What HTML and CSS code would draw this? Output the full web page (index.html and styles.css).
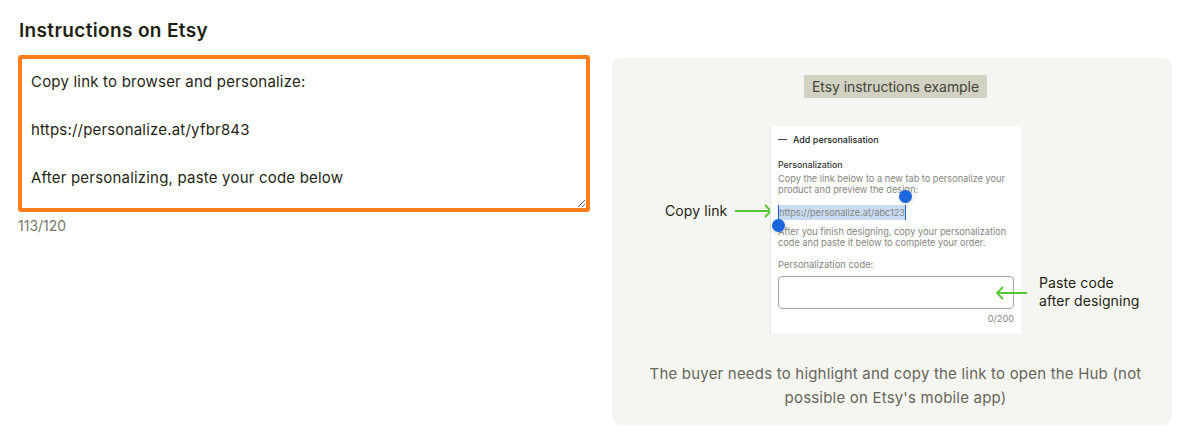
FILE: index.html
```html
<!DOCTYPE html>
<html lang="en">
<head>
  <meta charset="UTF-8">
  <meta name="viewport" content="width=device-width, initial-scale=1.0">
  <title>Instructions on Etsy</title>
  <link rel="stylesheet" href="styles.css">
</head>
<body>
  <h2 class="title">Instructions on Etsy</h2>
  <div class="columns">
    <div class="editor">
      <textarea class="editor-input" spellcheck="false">Copy link to browser and personalize:

https://personalize.at/yfbr843

After personalizing, paste your code below</textarea>
      <div class="counter">113/120</div>
    </div>

    <section class="example">
      <div class="example-tag">Etsy instructions example</div>

      <div class="figure">
        <div class="callout callout-copy">Copy link</div>
        <svg class="arrow arrow-copy" viewBox="0 0 38 14" width="38" height="14">
          <path d="M0 7H36M30 1l6 6-6 6" fill="none" stroke="#56c632" stroke-width="1.8"/>
        </svg>

        <div class="mock">
          <div class="mock-head"><span class="mock-dash"></span>Add personalisation</div>
          <div class="mock-label">Personalization</div>
          <p class="mock-text">Copy the link below to a new tab to personalize your product and preview the design:</p>
          <div class="mock-link"><span class="mock-selected">https://personalize.at/abc123</span></div>
          <p class="mock-text">After you finish designing, copy your personalization code and paste it below to complete your order.</p>
          <div class="mock-code-label">Personalization code:</div>
          <div class="mock-input"></div>
          <div class="mock-count">0/200</div>
          <span class="handle handle-top"></span>
          <span class="handle handle-bottom"></span>
        </div>

        <svg class="arrow arrow-paste" viewBox="0 0 32 14" width="32" height="14">
          <path d="M32 7H2M8 1L2 7l6 6" fill="none" stroke="#56c632" stroke-width="1.8"/>
        </svg>
        <div class="callout callout-paste">Paste code<br>after designing</div>
      </div>

      <p class="example-note">The buyer needs to highlight and copy the link to open the Hub (not possible on Etsy's mobile app)</p>
    </section>
  </div>
</body>
</html>
```

FILE: styles.css
```css
* {
  box-sizing: border-box;
}

html,
body {
  height: 100%;
}

body {
  margin: 0;
  padding: 20px 28px 0 18px;
  background-color: #fff;
  color: #1f1f14;
  font-family: "Inter", "Liberation Sans", sans-serif;
  overflow: hidden;
}

.title {
  margin: 0 0 13px 1px;
  font-size: 19px;
  line-height: 22px;
  font-weight: 600;
  letter-spacing: 0.35px;
}

.columns {
  display: flex;
  align-items: flex-start;
  gap: 22px;
}

.editor {
  width: 572px;
  flex-shrink: 0;
}

.editor-input {
  display: block;
  width: 100%;
  height: 157px;
  padding: 11px 8px 0 9px;
  border: 4px solid #ff7d1a;
  border-radius: 3px;
  outline: none;
  font-family: inherit;
  font-size: 15px;
  line-height: 24px;
  letter-spacing: 0.2px;
  color: #1f1f14;
  background: #fff;
}

.counter {
  margin-top: 6px;
  font-size: 14px;
  line-height: 16px;
  color: #77776a;
}

.example {
  flex: 1;
  height: 367px;
  margin-top: 3px;
  padding: 17px 30px 0 37px;
  background-color: #f5f5f1;
  border-radius: 8px;
  text-align: center;
}

.example-tag {
  display: inline-block;
  padding: 0 8px;
  background-color: #d2d2c3;
  font-size: 14px;
  line-height: 23px;
  letter-spacing: -0.08px;
  color: #44443a;
}

.figure {
  position: relative;
  margin: 28px 0 0 -7px;
  height: 208px;
  text-align: left;
}

.mock {
  position: absolute;
  left: 128px;
  top: 0;
  width: 251px;
  height: 208px;
  padding: 0 7px;
  background-color: #fff;
  border-left: 1px solid #e6e6e6;
  font-size: 9.2px;
  line-height: 11.5px;
  color: #85857f;
}

.mock-head {
  display: flex;
  align-items: center;
  gap: 6px;
  height: 27px;
  font-size: 9px;
  color: #222;
  font-weight: 500;
}

.mock-dash {
  width: 9px;
  height: 1px;
  background-color: #444;
}

.mock-label {
  margin-top: 6px;
  font-size: 8.8px;
  color: #333;
  font-weight: 500;
}

.mock-text {
  margin: 2px 0 0;
}

.mock-link {
  margin: 9px 0 6px;
  font-size: 9.2px;
  line-height: 15px;
  height: 15px;
}

.mock-selected {
  display: inline-block;
  background-color: #c9dcf3;
  border-left: 1px solid #1a66dd;
  border-right: 1px solid #1a66dd;
}

.mock-code-label {
  margin-top: 10px;
  font-size: 9.4px;
}

.mock-input {
  margin-top: 6px;
  height: 33px;
  border: 1px solid #a5a5a5;
  border-radius: 4px;
}

.mock-count {
  margin-top: 4px;
  text-align: right;
}

.handle {
  position: absolute;
  width: 13px;
  height: 13px;
  border-radius: 50%;
  background-color: #1a66dd;
  box-shadow: 0 1px 4px rgba(0, 0, 0, 0.2);
}

.handle-top {
  left: 128px;
  top: 64px;
}

.handle-bottom {
  left: 1px;
  top: 93px;
}

.arrow {
  position: absolute;
}

.arrow-copy {
  left: 93px;
  top: 78px;
}

.arrow-paste {
  left: 353px;
  top: 160px;
}

.callout {
  position: absolute;
  font-size: 14px;
  line-height: 18px;
  letter-spacing: 0.1px;
  color: #1f1f14;
}

.callout-copy {
  left: 23px;
  top: 76px;
}

.callout-paste {
  left: 397px;
  top: 148px;
}

.example-note {
  margin: 28px 0 0;
  font-size: 15px;
  line-height: 24px;
  letter-spacing: 0.2px;
  color: #66665a;
}
```
